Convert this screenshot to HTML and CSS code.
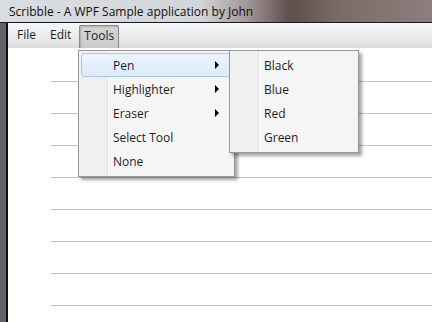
FILE: index.html
```html
<!DOCTYPE html>
<html lang="en">
<head>
    <meta charset="UTF-8">
    <title>Scribble</title>
    <link rel="stylesheet" href="styles.css">
</head>
<body>
    <div class="window">
        <div class="titlebar">Scribble - A WPF Sample application by John</div>
        <div class="frame">
            <div class="menubar">
                <span class="menu-item">File</span>
                <span class="menu-item">Edit</span>
                <span class="menu-item open">Tools</span>
            </div>
            <div class="canvas">
                <div class="rule"></div>
                <div class="rule"></div>
                <div class="rule"></div>
                <div class="rule"></div>
                <div class="rule"></div>
                <div class="rule"></div>
                <div class="rule"></div>
                <div class="rule"></div>
            </div>
        </div>

        <!-- Tools dropdown -->
        <div class="popup tools-menu">
            <div class="entry active"><span>Pen</span><i class="arrow"></i></div>
            <div class="entry"><span>Highlighter</span><i class="arrow"></i></div>
            <div class="entry"><span>Eraser</span><i class="arrow"></i></div>
            <div class="entry"><span>Select Tool</span></div>
            <div class="entry"><span>None</span></div>
        </div>

        <!-- Pen submenu -->
        <div class="popup pen-menu">
            <div class="entry"><span>Black</span></div>
            <div class="entry"><span>Blue</span></div>
            <div class="entry"><span>Red</span></div>
            <div class="entry"><span>Green</span></div>
        </div>
    </div>
</body>
</html>
```

FILE: styles.css
```css
* {
    box-sizing: border-box;
}
body {
    margin: 0;
    width: 432px;
    height: 322px;
    overflow: hidden;
    font-family: "Open Sans", "DejaVu Sans", sans-serif;
    font-size: 12px;
    color: #1e1e1e;
    background: #4a5560;
}
.window {
    position: relative;
    height: 322px;
    display: flex;
    flex-direction: column;
    background: linear-gradient(90deg, #5a6470 0px, #6c5d5a 6px);
}
.titlebar {
    height: 23px;
    padding: 3px 0 0 9px;
    color: #101010;
    background: linear-gradient(90deg, #d9dde1 0px, #d3d6d9 200px, #9d9291 250px, #5e4f4d 290px, #7b6c6a 340px, #8c7e7c 432px);
    border-bottom: 1px solid #1b1b1b;
}
.frame {
    flex: 1;
    display: flex;
    flex-direction: column;
    margin-left: 6px;
    border-left: 2px solid #111;
    background: #fff;
}
.menubar {
    height: 25px;
    display: flex;
    align-items: center;
    padding: 0 0 0 2px;
    background: linear-gradient(#f6f7f8, #e9eaeb 60%, #dadbdc);
}
.menu-item {
    padding: 1px 6px 2px 6px;
    border: 1px solid transparent;
    line-height: 18px;
}
.menu-item.open {
    margin-left: 1px;
    border-color: #8a8a8a;
    border-bottom: none;
    border-radius: 2px 2px 0 0;
    background: linear-gradient(#d6d6d6, #cbcbcb);
    box-shadow: inset 1px 1px 2px rgba(0, 0, 0, 0.18);
    align-self: flex-end;
    padding: 1px 4px 3px 4px;
}
.canvas {
    flex: 1;
    padding: 33px 0 0 43px;
    display: flex;
    flex-direction: column;
    gap: 31px;
}
.rule {
    height: 1px;
    background: #c3c3c3;
}

.popup {
    position: absolute;
    top: 50px;
    background: #f0f0f0;
    border: 1px solid #979797;
    padding: 2px 2px 3px;
    box-shadow: 3px 3px 3px rgba(0, 0, 0, 0.35);
    background-image: linear-gradient(90deg, #f0f0f0 28px, #e2e3e3 28px, #e2e3e3 29px, #ffffff 29px, #f5f5f5 30px);
}
.tools-menu {
    left: 78px;
    width: 157px;
}
.pen-menu {
    left: 229px;
    width: 130px;
}
.entry {
    height: 24px;
    display: flex;
    align-items: center;
    padding-left: 31px;
    padding-right: 12px;
    border: 1px solid transparent;
    border-radius: 3px;
}
.entry span {
    flex: 1;
}
.entry.active {
    border-color: #a8cae6;
    background: linear-gradient(#eaf4fc, #dcecf9);
}
.arrow {
    width: 0;
    height: 0;
    border-top: 4px solid transparent;
    border-bottom: 4px solid transparent;
    border-left: 4px solid #000;
}
```
